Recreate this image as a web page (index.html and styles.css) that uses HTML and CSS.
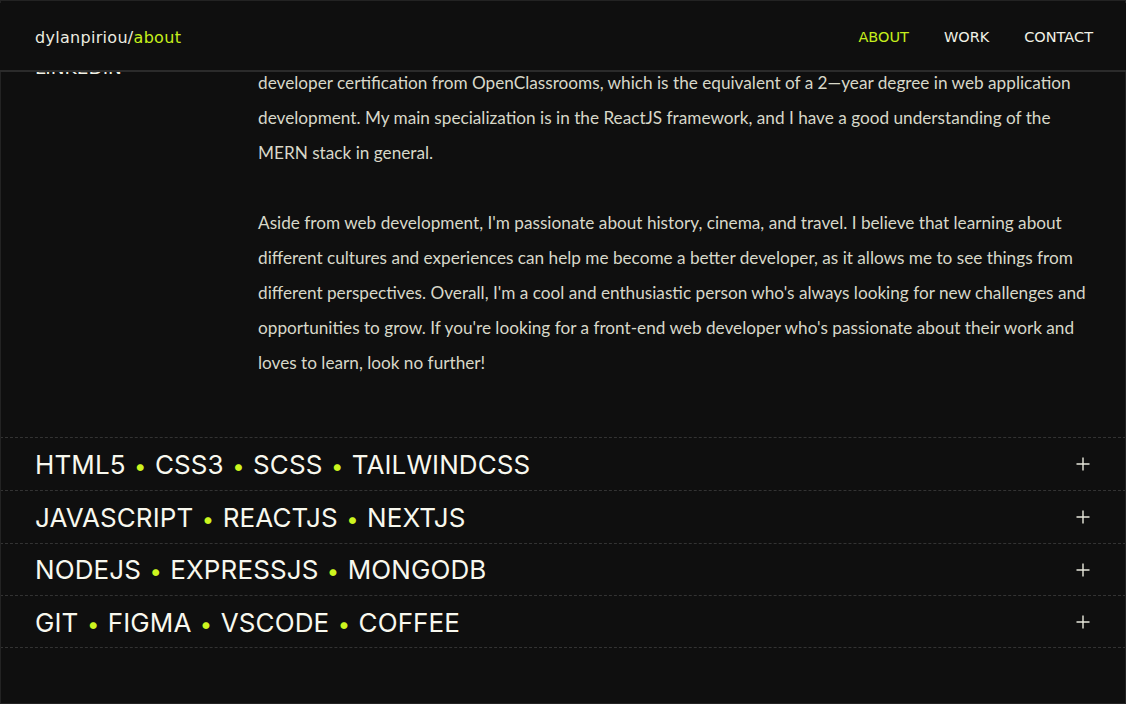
FILE: index.html
```html
<!DOCTYPE html>
<html lang="en">
<head>
<meta charset="utf-8">
<title>dylanpiriou/about</title>
<link rel="stylesheet" href="styles.css">
</head>
<body>
<header class="site-header">
  <a class="logo" href="#">dylanpiriou/<span class="accent">about</span></a>
  <nav class="nav">
    <a class="nav-link active" href="#">ABOUT</a>
    <a class="nav-link" href="#">WORK</a>
    <a class="nav-link" href="#">CONTACT</a>
  </nav>
</header>

<main class="page">
  <section class="about">
    <ul class="socials">
      <li>GITHUB</li>
      <li>MAIL</li>
      <li>LINKEDIN</li>
    </ul>
    <div class="bio">
      <p>Hi there! My name is Dylan Piriou and I'm a front-end web developer based in Lyon, France.<br>
      I've been passionate about the web for as long as I can remember, and I love building modern,<br>
      responsive and accessible websites and applications that are both beautiful and functional.<br>
      I enjoy turning complex problems into simple, elegant interfaces that people love to use.<br>
      In 2023, after a year of intensive training, I obtained my front-end web<br>
      developer certification from OpenClassrooms, which is the equivalent of a 2—year degree in web application<br>
      development. My main specialization is in the ReactJS framework, and I have a good understanding of the<br>
      MERN stack in general.</p>
      <p>Aside from web development, I'm passionate about history, cinema, and travel. I believe that learning about<br>
      different cultures and experiences can help me become a better developer, as it allows me to see things from<br>
      different perspectives. Overall, I'm a cool and enthusiastic person who's always looking for new challenges and<br>
      opportunities to grow. If you're looking for a front-end web developer who's passionate about their work and<br>
      loves to learn, look no further!</p>
    </div>
  </section>

  <section class="skills">
    <div class="skill-row">
      <span class="skill-list">HTML5 <span class="dot">•</span> CSS3 <span class="dot">•</span> SCSS <span class="dot">•</span> TAILWINDCSS</span>
      <svg class="plus" viewBox="0 0 14 14" width="14" height="14"><path d="M7 0.5V13.5M0.5 7H13.5"/></svg>
    </div>
    <div class="skill-row">
      <span class="skill-list">JAVASCRIPT <span class="dot">•</span> REACTJS <span class="dot">•</span> NEXTJS</span>
      <svg class="plus" viewBox="0 0 14 14" width="14" height="14"><path d="M7 0.5V13.5M0.5 7H13.5"/></svg>
    </div>
    <div class="skill-row">
      <span class="skill-list">NODEJS <span class="dot">•</span> EXPRESSJS <span class="dot">•</span> MONGODB</span>
      <svg class="plus" viewBox="0 0 14 14" width="14" height="14"><path d="M7 0.5V13.5M0.5 7H13.5"/></svg>
    </div>
    <div class="skill-row">
      <span class="skill-list">GIT <span class="dot">•</span> FIGMA <span class="dot">•</span> VSCODE <span class="dot">•</span> COFFEE</span>
      <svg class="plus" viewBox="0 0 14 14" width="14" height="14"><path d="M7 0.5V13.5M0.5 7H13.5"/></svg>
    </div>
  </section>
</main>
</body>
</html>
```

FILE: styles.css
```css
* { box-sizing: border-box; }

html, body {
  margin: 0;
  padding: 0;
  background: #0f0f0f;
  overflow: hidden;
}

body {
  color: #e6e6d8;
  font-family: "Lato", "Liberation Sans", sans-serif;
}

body::after {
  content: "";
  position: fixed;
  inset: 0;
  border: 1px solid #232323;
  pointer-events: none;
}

a { text-decoration: none; color: inherit; }

.site-header {
  position: fixed;
  top: 3px;
  left: 0;
  right: 0;
  height: 69px;
  z-index: 10;
  display: flex;
  align-items: center;
  justify-content: space-between;
  padding: 1px 33px 0 35px;
  background: #0f0f0f;
  border-bottom: 2px solid #2b2b2b;
}

.logo {
  font-family: "DejaVu Sans", sans-serif;
  font-size: 16px;
  letter-spacing: 0.3px;
  color: #ecece0;
}

.accent { color: #c6ef1c; }

.nav {
  display: flex;
  gap: 35px;
}

.nav-link {
  font-family: "DejaVu Sans", sans-serif;
  font-size: 14.5px;
  color: #f2f2e6;
}

.nav-link.active { color: #c6ef1c; }

.page {
  margin-top: -110px;
}

.about {
  display: grid;
  grid-template-columns: 223px 1fr;
  padding: 0 35px 57px;
}

.socials {
  list-style: none;
  margin: 0;
  padding: 12px 0 0;
  display: flex;
  flex-direction: column;
  gap: 39px;
  font-family: "DejaVu Sans", sans-serif;
  font-size: 18.5px;
  line-height: 35px;
  color: #f2f2e6;
}

.bio p {
  margin: 0;
  font-size: 17.2px;
  line-height: 35px;
  color: #d8d8c9;
  white-space: nowrap;
}

.bio p + p { margin-top: 35px; }

.skills {
  display: flex;
  flex-direction: column;
}

.skill-row {
  height: 52.75px;
  display: flex;
  align-items: center;
  justify-content: space-between;
  padding: 1px 35px 0;
  border-top: 1px dashed #333333;
}

.skill-row:last-child { border-bottom: 1px dashed #333333; }

.skill-list {
  font-family: "Inter", sans-serif;
  font-size: 26px;
  letter-spacing: 0.1px;
  color: #f8f8ee;
}

.dot {
  color: #cdf51f;
  font-size: 22px;
  margin: 0 1px;
}

.plus {
  width: 14px;
  height: 14px;
  margin-right: 1px;
  fill: none;
  stroke: #e8e8dc;
  stroke-width: 1.4;
}
```
